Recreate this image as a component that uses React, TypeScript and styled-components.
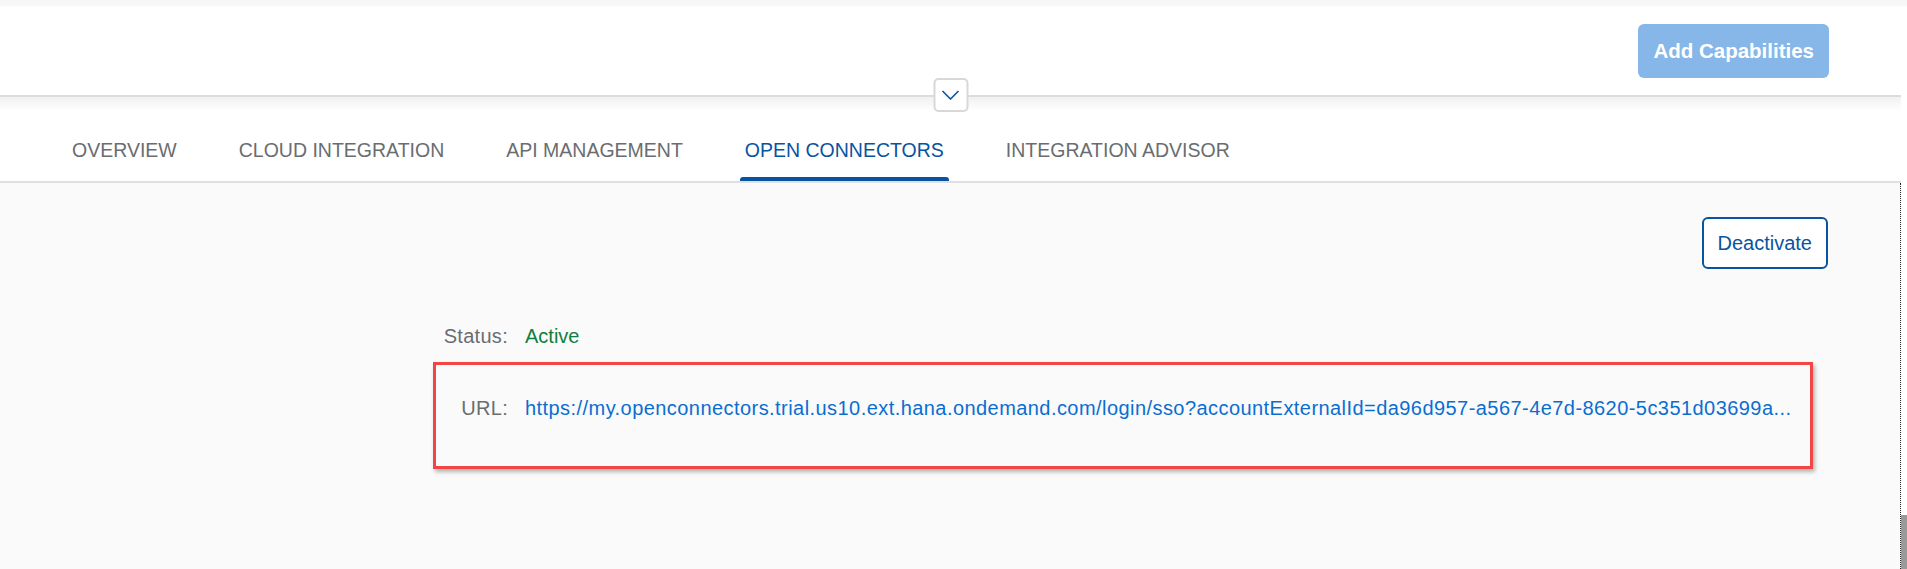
import styled, { createGlobalStyle } from "styled-components"

const GlobalStyle = createGlobalStyle`
  html, body {
    margin: 0;
    padding: 0;
    background: #f7f7f7;
    font-family: "Liberation Sans", Arial, sans-serif;
  }
`

type Tab = {
    label: string
    active?: boolean
}

const tabs: Tab[] = [
    { label: "OVERVIEW" },
    { label: "CLOUD INTEGRATION" },
    { label: "API MANAGEMENT" },
    { label: "OPEN CONNECTORS", active: true },
    { label: "INTEGRATION ADVISOR" },
]

// shown already shortened, the way the page truncates it
const connectorUrl =
    "https://my.openconnectors.trial.us10.ext.hana.ondemand.com/login/sso?accountExternalId=da96d957-a567-4e7d-8620-5c351d03699a..."

export default function App() {
    return (
        <>
            <GlobalStyle />
            <Page>
                <TopStrip />
                <Body>
                    <Main>
                        <Header>
                            <PrimaryButton disabled>Add Capabilities</PrimaryButton>
                        </Header>
                        <CollapseToggle aria-label="Expand header">
                            <svg width="18" height="10" viewBox="0 0 18 10">
                                <path d="M1 1 L9 9 L17 1" fill="none" stroke="#0854a0" strokeWidth="1.6" />
                            </svg>
                        </CollapseToggle>
                        <TabBar>
                            {tabs.map((t) => (
                                <TabItem key={t.label} $active={t.active}>
                                    <TabLabel>{t.label}</TabLabel>
                                    <TabIndicator $active={t.active} />
                                </TabItem>
                            ))}
                        </TabBar>
                        <Content>
                            <Actions>
                                <GhostButton>Deactivate</GhostButton>
                            </Actions>
                            <Form>
                                <Row>
                                    <Label>Status:</Label>
                                    <StatusText>Active</StatusText>
                                </Row>
                                <Row $highlight>
                                    <Label>URL:</Label>
                                    <Link href="#">{connectorUrl}</Link>
                                </Row>
                            </Form>
                        </Content>
                    </Main>
                    <ScrollTrack>
                        <ScrollThumb />
                    </ScrollTrack>
                </Body>
            </Page>
        </>
    )
}

const Page = styled.div`
  width: 1907px;
  height: 569px;
  overflow: hidden;
  display: flex;
  flex-direction: column;
`

const TopStrip = styled.div`
  height: 6px;
  background: #f7f7f7;
`

const Body = styled.div`
  flex: 1;
  display: flex;
`

const Main = styled.div`
  position: relative;
  width: 1901px;
  display: flex;
  flex-direction: column;
`

const Header = styled.div`
  height: 89px;
  background: #ffffff;
  border-bottom: 2px solid #dcdcdc;
  display: flex;
  align-items: center;
  justify-content: flex-end;
  padding: 0 72px;
`

const PrimaryButton = styled.button`
  height: 54px;
  padding: 0 15px;
  border: none;
  border-radius: 6px;
  background: #86b7e8;
  color: #ffffff;
  font-family: "Liberation Sans", Arial, sans-serif;
  font-size: 20.5px;
  font-weight: 700;
`

const CollapseToggle = styled.button`
  position: absolute;
  top: 72px;
  left: 50%;
  transform: translateX(-50%);
  width: 35px;
  height: 34px;
  padding: 0;
  background: #ffffff;
  border: 2px solid #d8d8d8;
  border-radius: 5px;
  display: flex;
  align-items: center;
  justify-content: center;
`

const TabBar = styled.div`
  height: 84px;
  display: flex;
  gap: 52px;
  padding: 0 67px;
  background: linear-gradient(to bottom, #f1f1f1 0, #ffffff 14px);
  border-bottom: 2px solid #e0e0e0;
`

const TabItem = styled.div<{ $active?: boolean }>`
  display: flex;
  flex-direction: column;
  justify-content: flex-end;
  color: ${(p) => (p.$active ? "#0854a0" : "#6a6d70")};
`

const TabLabel = styled.span`
  padding: 0 5px;
  font-size: 19.5px;
  line-height: 24px;
  margin-bottom: 15px;
  white-space: nowrap;
`

const TabIndicator = styled.span<{ $active?: boolean }>`
  height: 4px;
  border-radius: 3px 3px 0 0;
  background: ${(p) => (p.$active ? "#0854a0" : "transparent")};
`

const Content = styled.div`
  flex: 1;
  background: #fafafa;
  border-right: 1px dotted #222;
  padding: 34px 72px 0;
`

const Actions = styled.div`
  display: flex;
  justify-content: flex-end;
`

const GhostButton = styled.button`
  height: 52px;
  padding: 0 14px;
  background: #ffffff;
  border: 2px solid #0854a0;
  border-radius: 6px;
  color: #0854a0;
  font-family: "Liberation Sans", Arial, sans-serif;
  font-size: 20px;
`

const Form = styled.div`
  margin: 52px 0 0 361px;
  width: 1380px;
  display: flex;
  flex-direction: column;
  gap: 11px;
`

const Row = styled.div<{ $highlight?: boolean }>`
  display: grid;
  grid-template-columns: 72px minmax(0, 1fr);
  column-gap: 17px;
  align-items: center;
  font-size: 20px;
  line-height: 24px;
  border: 3px solid ${(p) => (p.$highlight ? "#f44545" : "transparent")};
  padding: ${(p) => (p.$highlight ? "31px 10px 46px 0" : "0 10px 0 0")};
  box-shadow: ${(p) => (p.$highlight ? "2px 3px 4px rgba(0, 0, 0, 0.28)" : "none")};
`

const Label = styled.span`
  text-align: right;
  color: #6a6d70;
  letter-spacing: 0.3px;
`

const StatusText = styled.span`
  color: #107e3e;
`

const Link = styled.a`
  color: #0a6ed1;
  text-decoration: none;
  white-space: nowrap;
  letter-spacing: 0.44px;
`

const ScrollTrack = styled.div`
  width: 6px;
  background: #ffffff;
  display: flex;
  flex-direction: column;
  justify-content: flex-end;
`

const ScrollThumb = styled.div`
  height: 54px;
  background: #9a9a9a;
`
